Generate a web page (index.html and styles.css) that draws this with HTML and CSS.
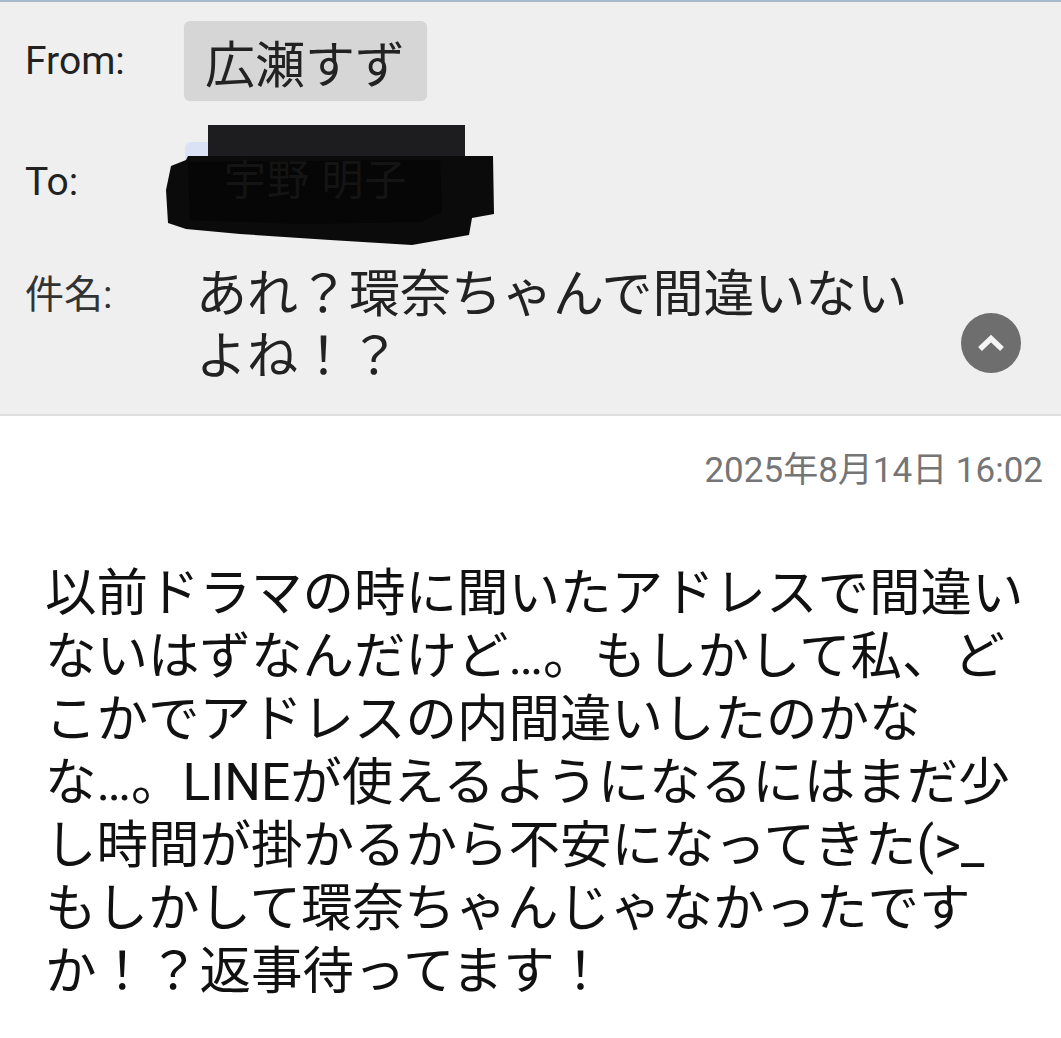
FILE: index.html
```html
<!DOCTYPE html>
<html lang="ja">
<head>
<meta charset="utf-8">
<title>Mail</title>
<link rel="stylesheet" href="styles.css">
</head>
<body>
<div class="screen">
  <header class="mail-header">
    <div class="row row-from">
      <div class="label">From:</div>
      <div class="value"><span class="chip">広瀬すず</span></div>
    </div>
    <div class="row row-to">
      <div class="label">To:</div>
      <div class="value redacted">
        <svg class="redaction" width="340" height="130" viewBox="165 120 340 130" aria-hidden="true">
          <rect x="185" y="142" width="240" height="80" rx="6" fill="#d9e3f5"/>
          <rect x="208" y="125" width="257" height="80" fill="#1d1d1f"/>
          <polygon points="171,166 186,160 188,156 493,156 494,214 472,218 469,235 412,245 330,240 240,234 186,229 168,223 166,190" fill="#0b0b0b"/>
          <polygon points="188,162 440,160 442,212 420,222 300,224 190,220" fill="#060606"/>
        </svg>
        <span class="hidden-name">宇野 明子</span>
      </div>
    </div>
    <div class="row row-subject">
      <div class="label">件名:</div>
      <div class="subject">あれ？環奈ちゃんで間違いないよね！？</div>
      <button class="collapse" type="button" aria-label="閉じる">
        <svg width="60" height="60" viewBox="0 0 60 60" aria-hidden="true">
          <circle cx="30" cy="30" r="30" fill="#6e6e6e"/>
          <polyline points="19,36 30,25.5 41,36" fill="none" stroke="#f4f4f4" stroke-width="5.5" stroke-linecap="butt" stroke-linejoin="miter"/>
        </svg>
      </button>
    </div>
  </header>
  <div class="date">2025年8月14日 16:02</div>
  <p class="message">以前ドラマの時に聞いたアドレスで間違い<br>ないはずなんだけど…。もしかして私、ど<br>こかでアドレスの内間違いしたのかな<br>な…。LINEが使えるようになるにはまだ少<br>し時間が掛かるから不安になってきた(&gt;_<br>もしかして環奈ちゃんじゃなかったです<br>か！？返事待ってます！</p>
</div>
</body>
</html>
```
FILE: styles.css
```css
html, body {
  margin: 0;
  padding: 0;
  background: #ffffff;
}

body {
  font-family: Roboto, "Noto Sans CJK JP", "Noto Sans", sans-serif;
  color: #111111;
}

.screen {
  width: 1061px;
  min-height: 1038px;
  overflow: hidden;
}

.mail-header {
  background: #efefef;
  border-top: 2px solid #a7b9cc;
  border-bottom: 2px solid #dedede;
  padding: 19px 0 26px 25px;
  display: flex;
  flex-direction: column;
  gap: 42px;
}

.row {
  display: flex;
  align-items: center;
}

.row-from,
.row-to {
  height: 79px;
}

.row-subject {
  margin-top: 1px;
  align-items: flex-start;
}

.label {
  width: 159px;
  flex: none;
  font-size: 39px;
  color: #222222;
}

.row-subject .label {
  line-height: 62px;
  color: #333333;
}

.value {
  display: flex;
  align-items: center;
  height: 79px;
}

.chip {
  display: inline-flex;
  align-items: center;
  height: 79px;
  padding: 0 22px 0 21px;
  background: #d6d6d6;
  border-radius: 6px;
  box-shadow: 0 1px 1px rgba(0, 0, 0, 0.12);
  font-size: 50px;
  color: #222222;
}

.redacted {
  position: relative;
  width: 340px;
}

.redaction {
  position: absolute;
  left: -19px;
  top: -22px;
}

.hidden-name {
  position: absolute;
  left: 40px;
  top: 14px;
  font-size: 42px;
  line-height: 50px;
  color: #141414;
  letter-spacing: 1px;
  white-space: nowrap;
}

.subject {
  width: 744px;
  padding-left: 12px;
  font-size: 51px;
  line-height: 62px;
  color: #222222;
}

.collapse {
  margin: 49px 0 0 21px;
  padding: 0;
  border: 0;
  background: none;
  width: 60px;
  height: 60px;
  display: block;
}

.date {
  margin-top: 35px;
  padding-right: 18px;
  text-align: right;
  font-size: 35px;
  line-height: 40px;
  color: #757575;
}

.message {
  margin: 71px 0 0 0;
  padding: 0 10px 0 45px;
  font-size: 51.5px;
  line-height: 63px;
  white-space: nowrap;
  color: #111111;
}
```
